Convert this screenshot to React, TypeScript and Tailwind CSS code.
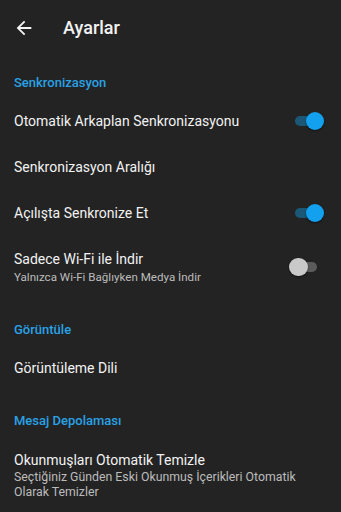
import { useState } from "react";

type ToggleProps = {
  on: boolean;
  onChange: () => void;
};

function Toggle({ on, onChange }: ToggleProps) {
  if (on) {
    return (
      <button
        onClick={onChange}
        className="relative w-[29px] h-[19px] shrink-0 cursor-pointer"
      >
        <span className="absolute left-0 top-[4.5px] w-[26px] h-[10px] rounded-full bg-[#1b5878]" />
        <span className="absolute right-0 top-0 w-[18.5px] h-[18.5px] rounded-full bg-[#13a1ef] shadow-[0_1px_2px_rgba(0,0,0,0.5)]" />
      </button>
    );
  }
  return (
    <button
      onClick={onChange}
      className="relative w-[28px] h-[19px] shrink-0 cursor-pointer"
    >
      <span className="absolute right-0 top-[4.5px] w-[24px] h-[10px] rounded-full bg-[#5b5b5b]" />
      <span className="absolute left-0 top-0 w-[18.5px] h-[18.5px] rounded-full bg-[#c9c9c9] shadow-[0_1px_2px_rgba(0,0,0,0.5)]" />
    </button>
  );
}

function SectionTitle({ title, pad }: { title: string; pad: string }) {
  return (
    <div className={`px-[14px] ${pad}`}>
      <h2 className="text-[13px] leading-[16px] font-medium text-[#29a2e6]">
        {title}
      </h2>
    </div>
  );
}

export default function App() {
  const [autoSync, setAutoSync] = useState(true);
  const [syncOnStart, setSyncOnStart] = useState(true);
  const [wifiOnly, setWifiOnly] = useState(false);

  return (
    <div
      className="min-h-screen w-full bg-[#232323] text-[#f2f2f2]"
      style={{ fontFamily: "Roboto, 'Noto Sans', sans-serif" }}
    >
      {/* APP BAR */}
      <header className="h-14 flex items-center">
        <button className="ml-[13px] w-[22px] h-[22px] cursor-pointer">
          <svg viewBox="0 0 24 24" width="22" height="22" fill="#f5f5f5">
            <path d="M20 11H7.83l5.59-5.59L12 4l-8 8 8 8 1.41-1.41L7.83 13H20v-2z" />
          </svg>
        </button>
        <h1 className="ml-[28px] text-[18px] font-medium leading-none">Ayarlar</h1>
      </header>

      {/* SENKRONIZASYON */}
      <SectionTitle title="Senkronizasyon" pad="pt-[19px] pb-[7px]" />
      <div className="h-[46px] flex items-center justify-between pl-[14px] pr-[17px]">
        <span className="text-[14px] leading-[20px]">Otomatik Arkaplan Senkronizasyonu</span>
        <Toggle on={autoSync} onChange={() => setAutoSync(!autoSync)} />
      </div>
      <div className="h-[46px] flex items-center pl-[14px] pr-[17px]">
        <span className="text-[14px] leading-[20px]">Senkronizasyon Aralığı</span>
      </div>
      <div className="h-[46px] flex items-center justify-between pl-[14px] pr-[17px]">
        <span className="text-[14px] leading-[20px]">Açılışta Senkronize Et</span>
        <Toggle on={syncOnStart} onChange={() => setSyncOnStart(!syncOnStart)} />
      </div>
      <div className="flex items-center justify-between pl-[14px] pr-[24px] pt-[13px] pb-[17px]">
        <div className="flex flex-col">
          <span className="text-[14px] leading-[20px]">Sadece Wi-Fi ile İndir</span>
          <span className="text-[11.6px] leading-[16px] text-[#bcbcbc]">
            Yalnızca Wi-Fi Bağlıyken Medya İndir
          </span>
        </div>
        <Toggle on={wifiOnly} onChange={() => setWifiOnly(!wifiOnly)} />
      </div>

      {/* GORUNTULE */}
      <SectionTitle title="Görüntüle" pad="pt-[20px] pb-[7px]" />
      <div className="h-[46px] flex items-center pl-[14px] pr-[17px]">
        <span className="text-[14px] leading-[20px]">Görüntüleme Dili</span>
      </div>

      {/* MESAJ DEPOLAMASI */}
      <SectionTitle title="Mesaj Depolaması" pad="pt-[22px] pb-[9px]" />
      <div className="flex flex-col pl-[14px] pr-[17px] pt-[12px] pb-[12px]">
        <span className="text-[14px] leading-[20px]">Okunmuşları Otomatik Temizle</span>
        <span className="text-[12.3px] leading-[14.5px] text-[#bcbcbc]">
          Seçtiğiniz Günden Eski Okunmuş İçerikleri Otomatik Olarak Temizler
        </span>
      </div>
    </div>
  );
}
